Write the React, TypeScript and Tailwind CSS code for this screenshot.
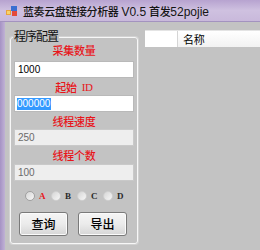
import React from "react";

const cjk = { fontFamily: '"Noto Sans CJK SC", "Liberation Sans", sans-serif' };
const latin = { fontFamily: '"Liberation Sans", "Noto Sans CJK SC", sans-serif' };

function Label({ children }: { children: React.ReactNode }) {
  return (
    <div className="h-[13px] flex items-center justify-center text-[11px] leading-[13px] font-medium text-[#e8161b] tracking-[-0.3px]" style={cjk}>
      {children}
    </div>
  );
}

function Box({ children, disabled }: { children?: React.ReactNode; disabled?: boolean }) {
  return (
    <div
      className={
        "mx-[3px] h-[17px] flex items-center pl-[3px] text-[10px] border " +
        (disabled
          ? "bg-[#eeeeee] border-[#c9c9c9] text-[#6a6a6a]"
          : "bg-white border-[#b9b9b9] text-black")
      }
      style={latin}
    >
      {children}
    </div>
  );
}

function Radio({ letter, red }: { letter: string; red?: boolean }) {
  return (
    <div className="flex items-center">
      <div
        className={
          "w-[10px] h-[10px] rounded-full border bg-gradient-to-br from-[#d6d6d6] to-[#f7f7f7] " +
          (red ? "border-[#a0a0a0]" : "border-[#d0d0d0]")
        }
      />
      <span
        className={"ml-[4px] w-[6px] text-[9px] leading-[10px] font-bold " + (red ? "text-[#e8161b]" : "text-[#2a2a2a]")}
        style={{ fontFamily: '"Liberation Serif", serif' }}
      >
        {letter}
      </span>
    </div>
  );
}

function Btn({ children }: { children: React.ReactNode }) {
  return (
    <div
      className="w-[49px] h-[24px] flex items-center justify-center rounded-[3px] border border-[#7a7a7a] bg-gradient-to-b from-[#f5f5f5] via-[#ebebeb] to-[#d6d6d6] text-[12px] font-medium text-black shadow-[inset_0_0_0_1px_#fbfbfb]"
      style={cjk}
    >
      {children}
    </div>
  );
}

export default function App() {
  return (
    <div className="w-[260px] h-[250px] overflow-hidden flex flex-col bg-[#c3c3c3]">
      {/* title bar */}
      <div className="h-[22px] flex items-center pl-[6px] pt-[2px] bg-gradient-to-b from-[#b7a3d0] via-[#cfc1e0] to-[#c9b9db] border-b border-[#a393bf]">
        <svg width="12" height="11" viewBox="0 0 12 11" className="shrink-0">
          <rect x="0" y="4" width="5" height="5" fill="#e9a23b" />
          <rect x="5" y="0" width="6" height="5" fill="#3b6fd1" />
          <rect x="6" y="5" width="5" height="5" fill="#e44a3a" />
          <rect x="1" y="5" width="3" height="3" fill="#f7d46b" />
        </svg>
        <div className="ml-[5px] flex items-center text-[#151515] whitespace-nowrap">
          <span className="text-[11px] font-medium tracking-[-0.4px]" style={cjk}>蓝奏云盘链接分析器</span>
          <span className="text-[12px] ml-[3px]" style={latin}>V0.5</span>
          <span className="text-[11px] font-medium ml-[3px] tracking-[-0.4px]" style={cjk}>首发</span>
          <span className="text-[12px]" style={latin}>52pojie</span>
        </div>
      </div>

      <div className="flex flex-1">
        <div className="w-[5px] bg-gradient-to-r from-[#a592c4] to-[#c0b2d5]" />
        <div className="flex flex-1">
          {/* left panel */}
          <div className="w-[137px] pl-[5px] pt-[15px]">
            <div className="relative w-[128px] h-[207px] rounded-[3px] border border-[#f7f7f7] shadow-[0_0_0_1px_#d2d2d2]">
              <div
                className="absolute left-[2px] top-[-10px] px-[1px] bg-[#c3c3c3] text-[12px] leading-[15px] text-[#111] tracking-[-1px]"
                style={cjk}
              >
                程序配置
              </div>
              <div className="pt-[6px] flex flex-col">
                <Label>采集数量</Label>
                <div className="mt-[4px]">
                  <Box>1000</Box>
                </div>
                <div className="mt-[3px]">
                  <Label>
                    起始<span className="ml-[5px]" style={{ fontFamily: '"Liberation Serif", serif' }}>ID</span>
                  </Label>
                </div>
                <div className="mt-[1px]">
                  <Box>
                    <span className="bg-[#3399ff] text-white leading-[12px] -ml-[1px] pr-[1px]">000000</span>
                  </Box>
                </div>
                <div className="mt-[3px]">
                  <Label>线程速度</Label>
                </div>
                <div className="mt-[1px]">
                  <Box disabled>250</Box>
                </div>
                <div className="mt-[3px]">
                  <Label>线程个数</Label>
                </div>
                <div className="mt-[2px]">
                  <Box disabled>100</Box>
                </div>
                <div className="mt-[9px] h-[12px] flex items-center pl-[14px] gap-[6px]">
                  <Radio letter="A" red />
                  <Radio letter="B" />
                  <Radio letter="C" />
                  <Radio letter="D" />
                </div>
                <div className="mt-[10px] flex pl-[8px] gap-[10px]">
                  <Btn>查询</Btn>
                  <Btn>导出</Btn>
                </div>
              </div>
            </div>
          </div>

          {/* right panel: list view */}
          <div className="flex-1 pl-[3px] pt-[8px]">
            <div className="flex h-[17px] border-t border-[#e4e4e4]">
              <div className="w-[33px] bg-white border-r border-[#d5d5d5]" />
              <div
                className="flex-1 flex items-center pl-[5px] bg-gradient-to-b from-white to-[#f2f2f2] text-[11px] text-black tracking-[-0.3px]"
                style={cjk}
              >
                名称
              </div>
            </div>
          </div>
        </div>
      </div>
    </div>
  );
}
